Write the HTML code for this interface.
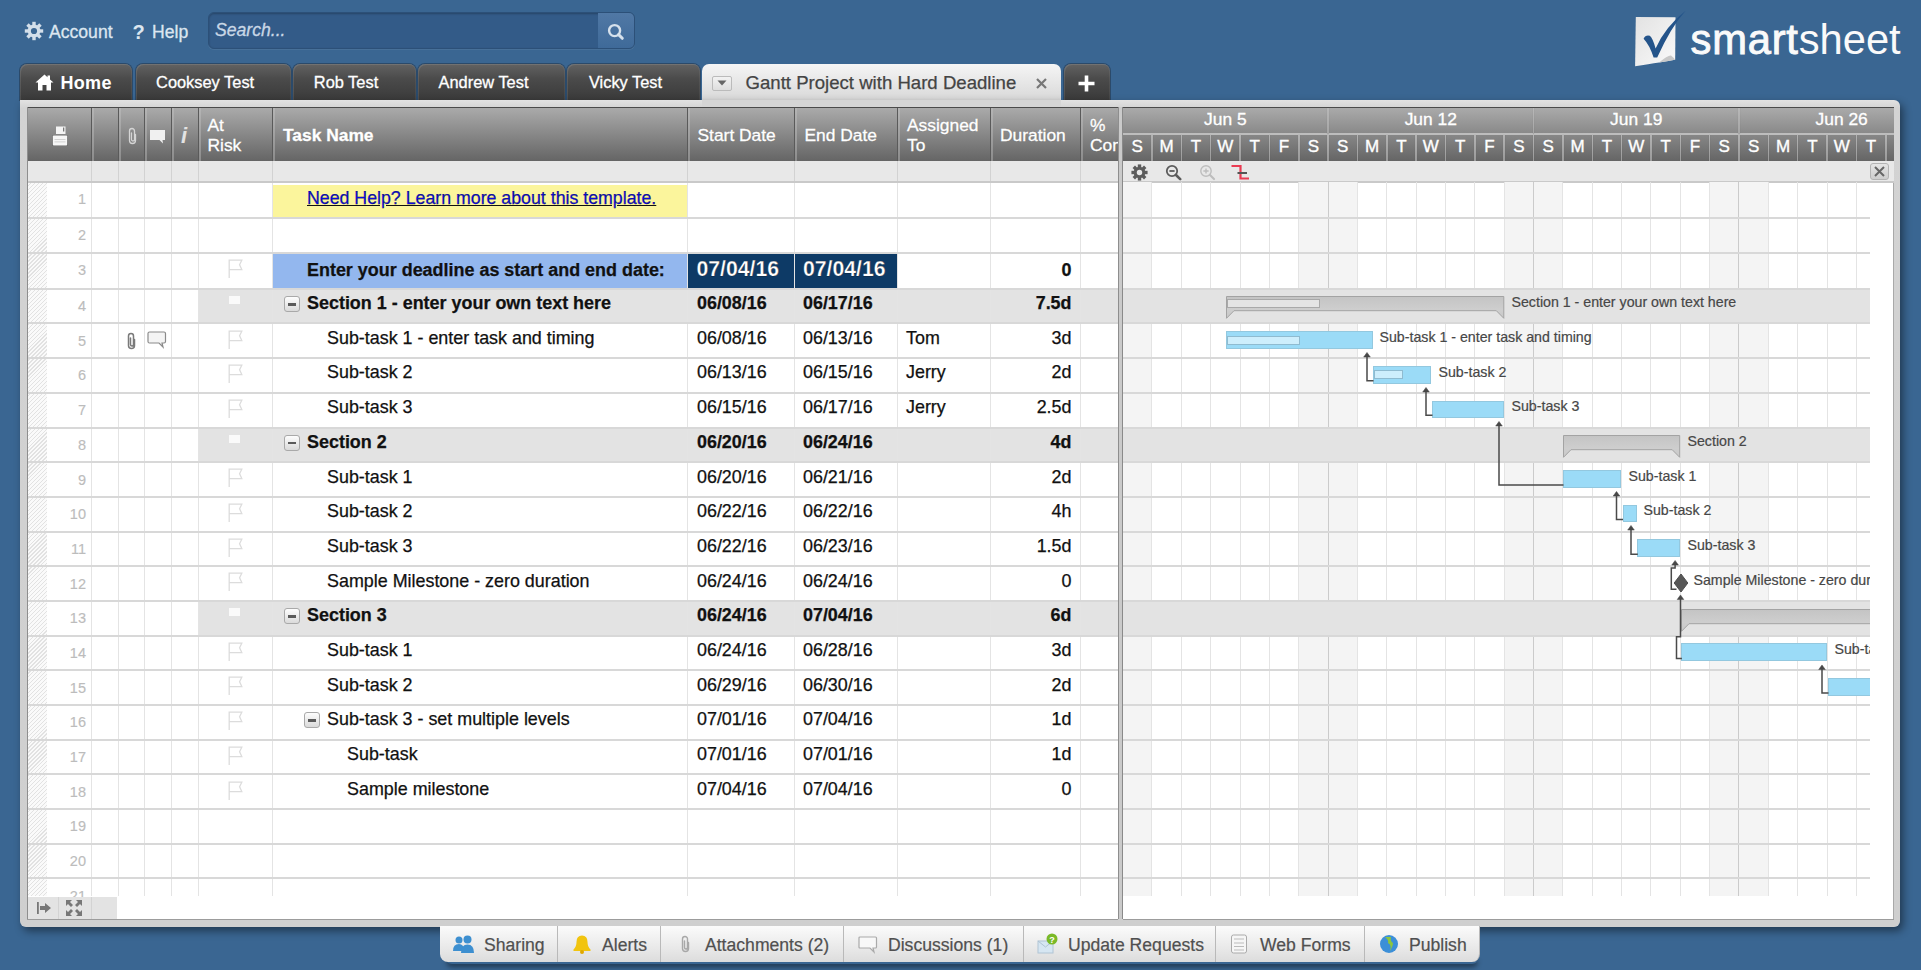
<!DOCTYPE html>
<html><head><meta charset="utf-8"><title>Smartsheet Gantt</title>
<style>
*{box-sizing:border-box;margin:0;padding:0}
html,body{width:1921px;height:970px;overflow:hidden}
body{background:#3a6692;position:relative;font-family:'Liberation Sans',sans-serif;color:#222}
.a{position:absolute}
.t{position:absolute;white-space:nowrap;line-height:1}
.tab{position:absolute;top:64px;height:36px;border-radius:7px 7px 0 0;background:linear-gradient(#626262 0%,#4b4b4b 40%,#3a3a3a 100%);box-shadow:inset 1px 1px 0 rgba(255,255,255,.10),inset -1px 0 0 rgba(255,255,255,.06), 0 0 0 1px #2b4a6a;color:#fff;font-size:16.4px;-webkit-text-stroke:0.3px #fff}
.hsep{position:absolute;top:108px;height:53px;width:3px;background:linear-gradient(#b5b5b5,#8c8c8c);border-left:1px solid #5a5a5a}
.ht{position:absolute;color:#fff;font-size:17.4px;line-height:19.7px;white-space:nowrap;-webkit-text-stroke:0.35px #fff;text-shadow:0 0 1px rgba(0,0,0,.25)}
.vl{position:absolute;width:1px;background:#e4e4e4}
.hl{position:absolute;height:2px;background:#d8d8d8}
.rn{position:absolute;color:#bcbcbc;font-size:14.5px;text-align:right;width:40px;line-height:1;-webkit-text-stroke:0.15px #bcbcbc}
.cell{position:absolute;font-size:17.9px;line-height:1;white-space:nowrap;color:#111;-webkit-text-stroke:0.25px #111}
.b{font-weight:bold}
.gl{position:absolute;font-size:14.2px;color:#474747;white-space:nowrap;line-height:1;-webkit-text-stroke:0.2px #474747}
.bar{position:absolute;background:#9bdbf7;border:1px solid #93c8df}
.prog{position:absolute;background:#cdeefc;border:1px solid #8fbbd0}
.btab{position:absolute;top:926px;height:36px;background:linear-gradient(#fbfbfb,#e6e6e6 70%,#dcdcdc);border-right:1px solid #b9b9b9;color:#444;font-size:17.6px}
</style></head><body>


<svg class="a" style="left:23.5px;top:21px" width="20" height="20" viewBox="0 0 20 20"><g fill="#d3dfea"><circle cx="10" cy="10" r="6.4"/>
<g id="teeth"><rect x="8.3" y="0.8" width="3.4" height="4" /><rect x="8.3" y="15.2" width="3.4" height="4"/><rect x="0.8" y="8.3" width="4" height="3.4"/><rect x="15.2" y="8.3" width="4" height="3.4"/></g>
<g transform="rotate(45 10 10)"><rect x="8.3" y="0.8" width="3.4" height="4" /><rect x="8.3" y="15.2" width="3.4" height="4"/><rect x="0.8" y="8.3" width="4" height="3.4"/><rect x="15.2" y="8.3" width="4" height="3.4"/></g></g>
<circle cx="10" cy="10" r="3.1" fill="#3a6692"/></svg>
<div class="t" style="left:49px;top:23.5px;font-size:17.6px;color:#dce6f0;-webkit-text-stroke:0.3px #dce6f0">Account</div>
<div class="t" style="left:132.5px;top:21.5px;font-size:20px;font-weight:bold;color:#dce6f0">?</div>
<div class="t" style="left:152px;top:23.5px;font-size:17.6px;color:#dce6f0;-webkit-text-stroke:0.3px #dce6f0">Help</div>
<div class="a" style="left:208px;top:12px;width:427px;height:37px;border-radius:6px;background:#335b88;border:1px solid #2c5078;box-shadow:inset 0 1px 2px rgba(0,0,0,.25), 0 1px 0 rgba(255,255,255,.07)"></div>
<div class="a" style="left:597.5px;top:13px;width:36.5px;height:35px;border-radius:0 5px 5px 0;background:linear-gradient(#5078a5,#3f6a99)"></div>
<div class="t" style="left:215px;top:22px;font-size:17.6px;font-style:italic;color:#c9d7e6;-webkit-text-stroke:0.3px #c9d7e6">Search...</div>
<svg class="a" style="left:606px;top:21px" width="20" height="20" viewBox="0 0 20 20"><circle cx="8.6" cy="9.6" r="5.5" fill="none" stroke="#d6e1ec" stroke-width="2.4"/><line x1="12.6" y1="13.6" x2="16.3" y2="17.3" stroke="#d6e1ec" stroke-width="3" stroke-linecap="round"/></svg>


<svg class="a" style="left:1633px;top:9px" width="58" height="60" viewBox="0 0 58 60">
<defs><linearGradient id="pg" x1="0" y1="0" x2="1" y2="1"><stop offset="0" stop-color="#e2e2e2"/><stop offset="1" stop-color="#fafafa"/></linearGradient></defs>
<path d="M2.8 7.9 L42.5 8.3 L42.2 50.8 Q30 53 2.1 57.3 Z" fill="url(#pg)"/>
<path d="M26 53.5 Q35 46 38 46.5 Q40.5 48.5 42.2 50.8 Q34 52.5 26 53.5Z" fill="#c8c8c8"/>
<path d="M10.6 29.8 Q12.5 25.6 16.8 26.8 Q19.6 28.8 22.6 39.5 Q32 18 52.6 1.8 Q38 18 24.2 48.5 L20.6 48.5 Q16.5 36 10.6 29.8 Z" fill="#24548a"/>
</svg>
<div class="t" style="left:1690.5px;top:18.6px;font-size:41.7px;color:#fafafa"><span style="-webkit-text-stroke:0.9px #fafafa;letter-spacing:0.8px">smart</span>sheet</div>

<div class="tab" style="left:20px;width:112px"></div>
<svg class="a" style="left:35px;top:74px" width="19" height="17" viewBox="0 0 19 17"><path d="M9.5 0.5 L12.5 3.2 V1.5 H15 V5.5 L18.5 8.5 L16 8.5 L16 16.5 L11.5 16.5 L11.5 11 L7.5 11 L7.5 16.5 L3 16.5 L3 8.5 L0.5 8.5 Z" fill="#fff"/></svg>
<div class="t" style="left:60.5px;top:74px;font-size:18px;font-weight:bold;color:#fff;letter-spacing:0.3px">Home</div>
<div class="tab" style="left:135.6px;width:155.00000000000003px"><div class="t" style="left:-8px;width:100%;text-align:center;top:9.7px">Cooksey Test</div></div>
<div class="tab" style="left:292.5px;width:123.0px"><div class="t" style="left:-8px;width:100%;text-align:center;top:9.7px">Rob Test</div></div>
<div class="tab" style="left:418px;width:147px"><div class="t" style="left:-8px;width:100%;text-align:center;top:9.7px">Andrew Test</div></div>
<div class="tab" style="left:567px;width:133px"><div class="t" style="left:-8px;width:100%;text-align:center;top:9.7px">Vicky Test</div></div>
<div class="a" style="left:702px;top:64px;width:359px;height:43px;border-radius:7px 7px 0 0;background:linear-gradient(#f5f5f5,#dadada 80%,#d3d3d3)"></div>
<div class="a" style="left:712px;top:75.5px;width:20px;height:15.5px;border:1px solid #bbb;border-radius:2px;background:linear-gradient(#f2f2f2,#dedede)"></div>
<svg class="a" style="left:716px;top:79px" width="12" height="8"><path d="M1.5 1.5 L10.5 1.5 L6 6.5Z" fill="#666"/></svg>
<div class="t" style="left:745.5px;top:74px;font-size:18.6px;color:#444;-webkit-text-stroke:0.25px #444">Gantt Project with Hard Deadline</div>
<svg class="a" style="left:1035px;top:77px" width="13" height="13"><path d="M2 2 L11 11 M11 2 L2 11" stroke="#777" stroke-width="2.2"/></svg>
<div class="tab" style="left:1064px;width:46px"></div>
<svg class="a" style="left:1077px;top:74px" width="19" height="19"><path d="M9.5 1.5 V17.5 M1.5 9.5 H17.5" stroke="#fff" stroke-width="3.6"/></svg>

<div class="a" style="left:20px;top:100px;width:1880px;height:826.5px;background:linear-gradient(#e2e2e2,#d3d3d3 1%,#cfcfcf);border-radius:0 6px 6px 6px;box-shadow:3px 4px 8px rgba(0,0,0,.45)"></div>
<div class="a" style="left:702px;top:100px;width:359px;height:7px;background:#d5d5d5"></div>

<div class="a" style="left:27px;top:107px;width:1091px;height:812px;background:#fff"></div>
<div class="a" style="left:1118px;top:107px;width:4.5px;height:812px;background:#cacaca;border-left:1px solid #8e8e8e;border-right:1px solid #8a8a8a"></div>
<div class="a" style="left:27px;top:107px;width:1091px;height:54px;background:linear-gradient(#aaaaaa,#656565);border-top:1.5px solid #4a4a4a"></div>
<div class="hsep" style="left:91.3px"></div>
<div class="hsep" style="left:117.7px"></div>
<div class="hsep" style="left:144.1px"></div>
<div class="hsep" style="left:170.9px"></div>
<div class="hsep" style="left:198.2px"></div>
<div class="hsep" style="left:271.8px"></div>
<div class="hsep" style="left:687.0px"></div>
<div class="hsep" style="left:793.9px"></div>
<div class="hsep" style="left:897.0px"></div>
<div class="hsep" style="left:990.1px"></div>
<div class="hsep" style="left:1079.5px"></div>

<svg class="a" style="left:51px;top:125px" width="18" height="22" viewBox="0 0 18 22"><rect x="1" y="10" width="16" height="11" rx="1.5" fill="rgba(0,0,0,.18)"/><rect x="5" y="1.5" width="9.5" height="7.5" fill="#f4f4f4"/><rect x="12" y="2.5" width="1.3" height="4" fill="#777"/><rect x="1.8" y="10.5" width="14.4" height="10" rx="1" fill="#f6f6f6"/><rect x="3.5" y="14" width="11" height="0.8" fill="#c8c8c8"/><rect x="3.5" y="16.5" width="11" height="0.8" fill="#c8c8c8"/></svg>
<svg class="a" style="left:125.5px;top:126.5px" width="12" height="18" viewBox="0 0 12 18"><path d="M5.5 6 V12.5 A1.5 1.5 0 0 0 8.5 12.5 V4 A2.5 2.5 0 0 0 3.5 4 V13.5 A3 3 0 0 0 9.5 13.5 V7.5" fill="none" stroke="#d5d5d5" stroke-width="1.3" stroke-linecap="round"/></svg>
<svg class="a" style="left:149px;top:128.5px" width="18" height="16" viewBox="0 0 18 16"><path d="M1 1 H16 V11 H13.5 L14 14.5 L10.5 11 H1 Z" fill="#f0f0f0"/></svg>
<div class="t" style="left:181px;top:124.5px;font-size:22px;font-style:italic;font-weight:bold;color:#e3e3e3">i</div>
<div class="ht" style="left:207.5px;top:116px">At<br>Risk</div>
<div class="ht b" style="left:283px;top:126px">Task Name</div>
<div class="ht" style="left:697.5px;top:126px">Start Date</div>
<div class="ht" style="left:804.5px;top:126px">End Date</div>
<div class="ht" style="left:907px;top:116px">Assigned<br>To</div>
<div class="ht" style="left:1000px;top:126px">Duration</div>
<div class="ht" style="left:1090px;top:116px;width:28px;overflow:hidden">%<br>Complete</div>

<div class="a" style="left:27px;top:161px;width:1091px;height:21px;background:#e8e8e8"></div>
<div class="vl" style="left:91.3px;top:161px;height:21px;background:#d2d2d2"></div>
<div class="vl" style="left:117.7px;top:161px;height:21px;background:#d2d2d2"></div>
<div class="vl" style="left:144.1px;top:161px;height:21px;background:#d2d2d2"></div>
<div class="vl" style="left:170.9px;top:161px;height:21px;background:#d2d2d2"></div>
<div class="vl" style="left:198.2px;top:161px;height:21px;background:#d2d2d2"></div>
<div class="vl" style="left:271.8px;top:161px;height:21px;background:#d2d2d2"></div>
<div class="vl" style="left:687.0px;top:161px;height:21px;background:#d2d2d2"></div>
<div class="vl" style="left:793.9px;top:161px;height:21px;background:#d2d2d2"></div>
<div class="vl" style="left:897.0px;top:161px;height:21px;background:#d2d2d2"></div>
<div class="vl" style="left:990.1px;top:161px;height:21px;background:#d2d2d2"></div>
<div class="vl" style="left:1079.5px;top:161px;height:21px;background:#d2d2d2"></div>
<div class="a" style="left:272.8px;top:184.56px;width:414.7px;height:32.790000000000006px;background:#fbf59c"></div>
<div class="a" style="left:272.8px;top:252.7px;width:414.7px;height:36.60000000000002px;background:#93b7ee"></div>
<div class="a" style="left:687.5px;top:252.7px;width:107px;height:36.60000000000002px;background:#0d3a66"></div>
<div class="a" style="left:794.4px;top:252.7px;width:103px;height:36.60000000000002px;background:#0d3a66"></div>
<div class="a" style="left:198.7px;top:288.8px;width:919.3px;height:34.68000000000001px;background:#e3e3e3"></div>
<div class="a" style="left:198.7px;top:427.52px;width:919.3px;height:34.680000000000064px;background:#e3e3e3"></div>
<div class="a" style="left:198.7px;top:600.9200000000001px;width:919.3px;height:34.67999999999995px;background:#e3e3e3"></div>
<div class="a" style="left:28px;top:183.06px;width:19px;height:713.44px;background:repeating-linear-gradient(135deg,#fafafa 0,#fafafa 1.9px,#e2e2e2 1.9px,#e2e2e2 2.8px)"></div>
<div class="vl" style="left:91.3px;top:182.06px;height:714.44px"></div>
<div class="vl" style="left:117.7px;top:182.06px;height:714.44px"></div>
<div class="vl" style="left:144.1px;top:182.06px;height:714.44px"></div>
<div class="vl" style="left:170.9px;top:182.06px;height:714.44px"></div>
<div class="vl" style="left:198.2px;top:182.06px;height:714.44px"></div>
<div class="vl" style="left:271.8px;top:182.06px;height:714.44px"></div>
<div class="vl" style="left:687.0px;top:182.06px;height:714.44px"></div>
<div class="vl" style="left:793.9px;top:182.06px;height:714.44px"></div>
<div class="vl" style="left:897.0px;top:182.06px;height:714.44px"></div>
<div class="vl" style="left:990.1px;top:182.06px;height:714.44px"></div>
<div class="vl" style="left:1079.5px;top:182.06px;height:714.44px"></div>
<div class="hl" style="left:27px;top:181.06px;width:1091px;background:#c9c9c9"></div>
<div class="hl" style="left:27px;top:217.05px;width:1091px;background:#d8d8d8"></div>
<div class="hl" style="left:27px;top:251.7px;width:1091px;background:#d8d8d8"></div>
<div class="hl" style="left:27px;top:287.8px;width:1091px;background:#d8d8d8"></div>
<div class="hl" style="left:27px;top:322.48px;width:1091px;background:#d8d8d8"></div>
<div class="hl" style="left:27px;top:357.16px;width:1091px;background:#d8d8d8"></div>
<div class="hl" style="left:27px;top:391.84000000000003px;width:1091px;background:#d8d8d8"></div>
<div class="hl" style="left:27px;top:426.52px;width:1091px;background:#d8d8d8"></div>
<div class="hl" style="left:27px;top:461.20000000000005px;width:1091px;background:#d8d8d8"></div>
<div class="hl" style="left:27px;top:495.88px;width:1091px;background:#d8d8d8"></div>
<div class="hl" style="left:27px;top:530.56px;width:1091px;background:#d8d8d8"></div>
<div class="hl" style="left:27px;top:565.24px;width:1091px;background:#d8d8d8"></div>
<div class="hl" style="left:27px;top:599.9200000000001px;width:1091px;background:#d8d8d8"></div>
<div class="hl" style="left:27px;top:634.6px;width:1091px;background:#d8d8d8"></div>
<div class="hl" style="left:27px;top:669.28px;width:1091px;background:#d8d8d8"></div>
<div class="hl" style="left:27px;top:703.96px;width:1091px;background:#d8d8d8"></div>
<div class="hl" style="left:27px;top:738.64px;width:1091px;background:#d8d8d8"></div>
<div class="hl" style="left:27px;top:773.3199999999999px;width:1091px;background:#d8d8d8"></div>
<div class="hl" style="left:27px;top:808.0px;width:1091px;background:#d8d8d8"></div>
<div class="hl" style="left:27px;top:842.6800000000001px;width:1091px;background:#d8d8d8"></div>
<div class="hl" style="left:27px;top:877.3599999999999px;width:1091px;background:#d8d8d8"></div>
<div class="rn" style="left:46px;top:192.36px">1</div>
<div class="cell" style="left:307px;top:190.16000000000003px;color:#0a0ae0;text-decoration:underline;font-size:17.75px">Need Help? Learn more about this template.</div>
<div class="rn" style="left:46px;top:228.35000000000002px">2</div>
<div class="rn" style="left:46px;top:263.0px">3</div>
<svg class="a" style="left:228px;top:258.9px" width="16" height="20" viewBox="0 0 16 20"><path d="M1.2 19 V1.2 H13.8 L11.6 5.8 L13.8 10.6 H1.2" fill="#fff" stroke="#dcdcdc" stroke-width="1.3"/></svg>
<div class="cell b" style="left:307px;top:261.7px;font-size:17.95px;">Enter your deadline as start and end date:</div>
<div class="cell b" style="left:696.5px;top:257.7px;color:#fff;font-size:21.2px">07/04/16</div>
<div class="cell b" style="left:803px;top:257.7px;color:#fff;font-size:21.2px">07/04/16</div>
<div class="cell b" style="left:990px;top:261.7px;width:81.5px;text-align:right">0</div>
<div class="rn" style="left:46px;top:299.1px">4</div>
<div class="a" style="left:229px;top:296.3px;width:11px;height:8px;background:#fafafa"></div>
<div class="cell b" style="left:307px;top:295.1px;font-size:17.95px;">Section 1 - enter your own text here</div>
<div class="a" style="left:284px;top:296.3px;width:15.5px;height:15.5px;border:1px solid #a9a9a9;border-radius:3px;background:linear-gradient(#fdfdfd,#dadada)"></div><div class="a" style="left:288.2px;top:303.1px;width:7.5px;height:2.6px;background:#5a5a5a"></div>
<div class="cell b" style="left:697px;top:295.1px">06/08/16</div>
<div class="cell b" style="left:803px;top:295.1px">06/17/16</div>
<div class="cell b" style="left:990px;top:295.1px;width:81.5px;text-align:right">7.5d</div>
<div class="rn" style="left:46px;top:333.78000000000003px">5</div>
<svg class="a" style="left:228px;top:329.68px" width="16" height="20" viewBox="0 0 16 20"><path d="M1.2 19 V1.2 H13.8 L11.6 5.8 L13.8 10.6 H1.2" fill="#fff" stroke="#dcdcdc" stroke-width="1.3"/></svg>
<svg class="a" style="left:125px;top:331.98px" width="12" height="18" viewBox="0 0 12 18"><path d="M5.5 6 V12.5 A1.5 1.5 0 0 0 8.5 12.5 V4 A2.5 2.5 0 0 0 3.5 4 V13.5 A3 3 0 0 0 9.5 13.5 V7.5" fill="none" stroke="#7a7a7a" stroke-width="1.5" stroke-linecap="round"/></svg>
<svg class="a" style="left:147px;top:331.48px" width="20" height="18" viewBox="0 0 20 18"><path d="M2.5 1 H17 Q18.5 1 18.5 2.5 V10.5 Q18.5 12 17 12 H15 L16 16 L12 12 H2.5 Q1 12 1 10.5 V2.5 Q1 1 2.5 1Z" fill="#f4f4f4" stroke="#8a8a8a" stroke-width="1.2"/></svg>
<div class="cell" style="left:327px;top:329.78000000000003px;">Sub-task 1 - enter task and timing</div>
<div class="cell" style="left:697px;top:329.78000000000003px">06/08/16</div>
<div class="cell" style="left:803px;top:329.78000000000003px">06/13/16</div>
<div class="cell" style="left:906px;top:329.78000000000003px">Tom</div>
<div class="cell" style="left:990px;top:329.78000000000003px;width:81.5px;text-align:right">3d</div>
<div class="rn" style="left:46px;top:368.46000000000004px">6</div>
<svg class="a" style="left:228px;top:364.36px" width="16" height="20" viewBox="0 0 16 20"><path d="M1.2 19 V1.2 H13.8 L11.6 5.8 L13.8 10.6 H1.2" fill="#fff" stroke="#dcdcdc" stroke-width="1.3"/></svg>
<div class="cell" style="left:327px;top:364.46000000000004px;">Sub-task 2</div>
<div class="cell" style="left:697px;top:364.46000000000004px">06/13/16</div>
<div class="cell" style="left:803px;top:364.46000000000004px">06/15/16</div>
<div class="cell" style="left:906px;top:364.46000000000004px">Jerry</div>
<div class="cell" style="left:990px;top:364.46000000000004px;width:81.5px;text-align:right">2d</div>
<div class="rn" style="left:46px;top:403.14000000000004px">7</div>
<svg class="a" style="left:228px;top:399.04px" width="16" height="20" viewBox="0 0 16 20"><path d="M1.2 19 V1.2 H13.8 L11.6 5.8 L13.8 10.6 H1.2" fill="#fff" stroke="#dcdcdc" stroke-width="1.3"/></svg>
<div class="cell" style="left:327px;top:399.14000000000004px;">Sub-task 3</div>
<div class="cell" style="left:697px;top:399.14000000000004px">06/15/16</div>
<div class="cell" style="left:803px;top:399.14000000000004px">06/17/16</div>
<div class="cell" style="left:906px;top:399.14000000000004px">Jerry</div>
<div class="cell" style="left:990px;top:399.14000000000004px;width:81.5px;text-align:right">2.5d</div>
<div class="rn" style="left:46px;top:437.82px">8</div>
<div class="a" style="left:229px;top:435.02px;width:11px;height:8px;background:#fafafa"></div>
<div class="cell b" style="left:307px;top:433.82px;font-size:17.95px;">Section 2</div>
<div class="a" style="left:284px;top:435.02px;width:15.5px;height:15.5px;border:1px solid #a9a9a9;border-radius:3px;background:linear-gradient(#fdfdfd,#dadada)"></div><div class="a" style="left:288.2px;top:441.82px;width:7.5px;height:2.6px;background:#5a5a5a"></div>
<div class="cell b" style="left:697px;top:433.82px">06/20/16</div>
<div class="cell b" style="left:803px;top:433.82px">06/24/16</div>
<div class="cell b" style="left:990px;top:433.82px;width:81.5px;text-align:right">4d</div>
<div class="rn" style="left:46px;top:472.50000000000006px">9</div>
<svg class="a" style="left:228px;top:468.40000000000003px" width="16" height="20" viewBox="0 0 16 20"><path d="M1.2 19 V1.2 H13.8 L11.6 5.8 L13.8 10.6 H1.2" fill="#fff" stroke="#dcdcdc" stroke-width="1.3"/></svg>
<div class="cell" style="left:327px;top:468.50000000000006px;">Sub-task 1</div>
<div class="cell" style="left:697px;top:468.50000000000006px">06/20/16</div>
<div class="cell" style="left:803px;top:468.50000000000006px">06/21/16</div>
<div class="cell" style="left:990px;top:468.50000000000006px;width:81.5px;text-align:right">2d</div>
<div class="rn" style="left:46px;top:507.18px">10</div>
<svg class="a" style="left:228px;top:503.08px" width="16" height="20" viewBox="0 0 16 20"><path d="M1.2 19 V1.2 H13.8 L11.6 5.8 L13.8 10.6 H1.2" fill="#fff" stroke="#dcdcdc" stroke-width="1.3"/></svg>
<div class="cell" style="left:327px;top:503.18px;">Sub-task 2</div>
<div class="cell" style="left:697px;top:503.18px">06/22/16</div>
<div class="cell" style="left:803px;top:503.18px">06/22/16</div>
<div class="cell" style="left:990px;top:503.18px;width:81.5px;text-align:right">4h</div>
<div class="rn" style="left:46px;top:541.8599999999999px">11</div>
<svg class="a" style="left:228px;top:537.76px" width="16" height="20" viewBox="0 0 16 20"><path d="M1.2 19 V1.2 H13.8 L11.6 5.8 L13.8 10.6 H1.2" fill="#fff" stroke="#dcdcdc" stroke-width="1.3"/></svg>
<div class="cell" style="left:327px;top:537.8599999999999px;">Sub-task 3</div>
<div class="cell" style="left:697px;top:537.8599999999999px">06/22/16</div>
<div class="cell" style="left:803px;top:537.8599999999999px">06/23/16</div>
<div class="cell" style="left:990px;top:537.8599999999999px;width:81.5px;text-align:right">1.5d</div>
<div class="rn" style="left:46px;top:576.54px">12</div>
<svg class="a" style="left:228px;top:572.44px" width="16" height="20" viewBox="0 0 16 20"><path d="M1.2 19 V1.2 H13.8 L11.6 5.8 L13.8 10.6 H1.2" fill="#fff" stroke="#dcdcdc" stroke-width="1.3"/></svg>
<div class="cell" style="left:327px;top:572.54px;">Sample Milestone - zero duration</div>
<div class="cell" style="left:697px;top:572.54px">06/24/16</div>
<div class="cell" style="left:803px;top:572.54px">06/24/16</div>
<div class="cell" style="left:990px;top:572.54px;width:81.5px;text-align:right">0</div>
<div class="rn" style="left:46px;top:611.22px">13</div>
<div class="a" style="left:229px;top:608.4200000000001px;width:11px;height:8px;background:#fafafa"></div>
<div class="cell b" style="left:307px;top:607.22px;font-size:17.95px;">Section 3</div>
<div class="a" style="left:284px;top:608.4200000000001px;width:15.5px;height:15.5px;border:1px solid #a9a9a9;border-radius:3px;background:linear-gradient(#fdfdfd,#dadada)"></div><div class="a" style="left:288.2px;top:615.22px;width:7.5px;height:2.6px;background:#5a5a5a"></div>
<div class="cell b" style="left:697px;top:607.22px">06/24/16</div>
<div class="cell b" style="left:803px;top:607.22px">07/04/16</div>
<div class="cell b" style="left:990px;top:607.22px;width:81.5px;text-align:right">6d</div>
<div class="rn" style="left:46px;top:645.9px">14</div>
<svg class="a" style="left:228px;top:641.8000000000001px" width="16" height="20" viewBox="0 0 16 20"><path d="M1.2 19 V1.2 H13.8 L11.6 5.8 L13.8 10.6 H1.2" fill="#fff" stroke="#dcdcdc" stroke-width="1.3"/></svg>
<div class="cell" style="left:327px;top:641.9px;">Sub-task 1</div>
<div class="cell" style="left:697px;top:641.9px">06/24/16</div>
<div class="cell" style="left:803px;top:641.9px">06/28/16</div>
<div class="cell" style="left:990px;top:641.9px;width:81.5px;text-align:right">3d</div>
<div class="rn" style="left:46px;top:680.5799999999999px">15</div>
<svg class="a" style="left:228px;top:676.48px" width="16" height="20" viewBox="0 0 16 20"><path d="M1.2 19 V1.2 H13.8 L11.6 5.8 L13.8 10.6 H1.2" fill="#fff" stroke="#dcdcdc" stroke-width="1.3"/></svg>
<div class="cell" style="left:327px;top:676.5799999999999px;">Sub-task 2</div>
<div class="cell" style="left:697px;top:676.5799999999999px">06/29/16</div>
<div class="cell" style="left:803px;top:676.5799999999999px">06/30/16</div>
<div class="cell" style="left:990px;top:676.5799999999999px;width:81.5px;text-align:right">2d</div>
<div class="rn" style="left:46px;top:715.26px">16</div>
<svg class="a" style="left:228px;top:711.1600000000001px" width="16" height="20" viewBox="0 0 16 20"><path d="M1.2 19 V1.2 H13.8 L11.6 5.8 L13.8 10.6 H1.2" fill="#fff" stroke="#dcdcdc" stroke-width="1.3"/></svg>
<div class="cell" style="left:327px;top:711.26px;">Sub-task 3 - set multiple levels</div>
<div class="a" style="left:304px;top:712.46px;width:15.5px;height:15.5px;border:1px solid #a9a9a9;border-radius:3px;background:linear-gradient(#fdfdfd,#dadada)"></div><div class="a" style="left:308.2px;top:719.26px;width:7.5px;height:2.6px;background:#5a5a5a"></div>
<div class="cell" style="left:697px;top:711.26px">07/01/16</div>
<div class="cell" style="left:803px;top:711.26px">07/04/16</div>
<div class="cell" style="left:990px;top:711.26px;width:81.5px;text-align:right">1d</div>
<div class="rn" style="left:46px;top:749.9399999999999px">17</div>
<svg class="a" style="left:228px;top:745.84px" width="16" height="20" viewBox="0 0 16 20"><path d="M1.2 19 V1.2 H13.8 L11.6 5.8 L13.8 10.6 H1.2" fill="#fff" stroke="#dcdcdc" stroke-width="1.3"/></svg>
<div class="cell" style="left:347px;top:745.9399999999999px;">Sub-task</div>
<div class="cell" style="left:697px;top:745.9399999999999px">07/01/16</div>
<div class="cell" style="left:803px;top:745.9399999999999px">07/01/16</div>
<div class="cell" style="left:990px;top:745.9399999999999px;width:81.5px;text-align:right">1d</div>
<div class="rn" style="left:46px;top:784.6199999999999px">18</div>
<svg class="a" style="left:228px;top:780.52px" width="16" height="20" viewBox="0 0 16 20"><path d="M1.2 19 V1.2 H13.8 L11.6 5.8 L13.8 10.6 H1.2" fill="#fff" stroke="#dcdcdc" stroke-width="1.3"/></svg>
<div class="cell" style="left:347px;top:780.6199999999999px;">Sample milestone</div>
<div class="cell" style="left:697px;top:780.6199999999999px">07/04/16</div>
<div class="cell" style="left:803px;top:780.6199999999999px">07/04/16</div>
<div class="cell" style="left:990px;top:780.6199999999999px;width:81.5px;text-align:right">0</div>
<div class="rn" style="left:46px;top:819.3px">19</div>
<div class="rn" style="left:46px;top:853.98px">20</div>
<div class="rn" style="left:46px;top:888.6599999999999px">21</div>
<div class="a" style="left:27px;top:896.5px;width:1091px;height:22.5px;background:#fff"></div>
<div class="a" style="left:27px;top:896.5px;width:90px;height:22.5px;background:#e3e3e3"></div>
<div class="a" style="left:57.5px;top:897px;width:1px;height:22px;background:#d3d3d3"></div><div class="a" style="left:91px;top:897px;width:1px;height:22px;background:#d3d3d3"></div>
<svg class="a" style="left:36px;top:900px" width="16" height="16" viewBox="0 0 16 16"><rect x="1" y="2" width="1.8" height="12" fill="#777"/><path d="M4 6 H9 V3 L15 8 L9 13 V10 H4Z" fill="#777"/></svg>
<svg class="a" style="left:65px;top:899px" width="18" height="18" viewBox="0 0 18 18"><g fill="#777"><path d="M1 1 H7 L5 3 L8 6 L6 8 L3 5 L1 7Z"/><path d="M17 1 V7 L15 5 L12 8 L10 6 L13 3 L11 1Z"/><path d="M1 17 V11 L3 13 L6 10 L8 12 L5 15 L7 17Z"/><path d="M17 17 H11 L13 15 L10 12 L12 10 L15 13 L17 11Z"/></g></svg>
<div class="a" style="left:26.5px;top:107px;width:1px;height:812.5px;background:#8e8e8e"></div>
<div class="a" style="left:27px;top:918.8px;width:1091px;height:1px;background:#9c9c9c"></div>
<div class="a" style="left:1122.5px;top:918.8px;width:771px;height:1px;background:#9c9c9c"></div>
<div class="a" style="left:1122.5px;top:107px;width:771px;height:812px;background:#fff;overflow:hidden">
<div class="a" style="left:0;top:0;width:771px;height:54px;background:linear-gradient(#aaaaaa,#656565);border-top:1.5px solid #4a4a4a"></div>
<div class="a" style="left:0;top:26px;width:771px;height:1.5px;background:#bdbdbd"></div>
<div class="t" style="left:-0.23000000000000043px;width:30px;text-align:center;top:31.3px;font-size:17px;color:#fff;-webkit-text-stroke:0.35px #fff">S</div>
<div class="a" style="left:28.75px;top:27.5px;width:1.5px;height:26px;background:linear-gradient(#b3b3b3,#9a9a9a);box-shadow:0 0 0.8px rgba(0,0,0,.25)"></div>
<div class="t" style="left:29.119999999999997px;width:30px;text-align:center;top:31.3px;font-size:17px;color:#fff;-webkit-text-stroke:0.35px #fff">M</div>
<div class="a" style="left:58.099999999999994px;top:27.5px;width:1.5px;height:26px;background:linear-gradient(#b3b3b3,#9a9a9a);box-shadow:0 0 0.8px rgba(0,0,0,.25)"></div>
<div class="t" style="left:58.47px;width:30px;text-align:center;top:31.3px;font-size:17px;color:#fff;-webkit-text-stroke:0.35px #fff">T</div>
<div class="a" style="left:87.45px;top:27.5px;width:1.5px;height:26px;background:linear-gradient(#b3b3b3,#9a9a9a);box-shadow:0 0 0.8px rgba(0,0,0,.25)"></div>
<div class="t" style="left:87.82px;width:30px;text-align:center;top:31.3px;font-size:17px;color:#fff;-webkit-text-stroke:0.35px #fff">W</div>
<div class="a" style="left:116.8px;top:27.5px;width:1.5px;height:26px;background:linear-gradient(#b3b3b3,#9a9a9a);box-shadow:0 0 0.8px rgba(0,0,0,.25)"></div>
<div class="t" style="left:117.16999999999999px;width:30px;text-align:center;top:31.3px;font-size:17px;color:#fff;-webkit-text-stroke:0.35px #fff">T</div>
<div class="a" style="left:146.15px;top:27.5px;width:1.5px;height:26px;background:linear-gradient(#b3b3b3,#9a9a9a);box-shadow:0 0 0.8px rgba(0,0,0,.25)"></div>
<div class="t" style="left:146.52px;width:30px;text-align:center;top:31.3px;font-size:17px;color:#fff;-webkit-text-stroke:0.35px #fff">F</div>
<div class="a" style="left:175.5px;top:27.5px;width:1.5px;height:26px;background:linear-gradient(#b3b3b3,#9a9a9a);box-shadow:0 0 0.8px rgba(0,0,0,.25)"></div>
<div class="t" style="left:175.87px;width:30px;text-align:center;top:31.3px;font-size:17px;color:#fff;-webkit-text-stroke:0.35px #fff">S</div>
<div class="a" style="left:204.85000000000002px;top:27.5px;width:1.5px;height:26px;background:linear-gradient(#b3b3b3,#9a9a9a);box-shadow:0 0 0.8px rgba(0,0,0,.25)"></div>
<div class="t" style="left:205.22px;width:30px;text-align:center;top:31.3px;font-size:17px;color:#fff;-webkit-text-stroke:0.35px #fff">S</div>
<div class="a" style="left:234.20000000000002px;top:27.5px;width:1.5px;height:26px;background:linear-gradient(#b3b3b3,#9a9a9a);box-shadow:0 0 0.8px rgba(0,0,0,.25)"></div>
<div class="t" style="left:234.57px;width:30px;text-align:center;top:31.3px;font-size:17px;color:#fff;-webkit-text-stroke:0.35px #fff">M</div>
<div class="a" style="left:263.55px;top:27.5px;width:1.5px;height:26px;background:linear-gradient(#b3b3b3,#9a9a9a);box-shadow:0 0 0.8px rgba(0,0,0,.25)"></div>
<div class="t" style="left:263.92px;width:30px;text-align:center;top:31.3px;font-size:17px;color:#fff;-webkit-text-stroke:0.35px #fff">T</div>
<div class="a" style="left:292.90000000000003px;top:27.5px;width:1.5px;height:26px;background:linear-gradient(#b3b3b3,#9a9a9a);box-shadow:0 0 0.8px rgba(0,0,0,.25)"></div>
<div class="t" style="left:293.27px;width:30px;text-align:center;top:31.3px;font-size:17px;color:#fff;-webkit-text-stroke:0.35px #fff">W</div>
<div class="a" style="left:322.25px;top:27.5px;width:1.5px;height:26px;background:linear-gradient(#b3b3b3,#9a9a9a);box-shadow:0 0 0.8px rgba(0,0,0,.25)"></div>
<div class="t" style="left:322.62px;width:30px;text-align:center;top:31.3px;font-size:17px;color:#fff;-webkit-text-stroke:0.35px #fff">T</div>
<div class="a" style="left:351.6px;top:27.5px;width:1.5px;height:26px;background:linear-gradient(#b3b3b3,#9a9a9a);box-shadow:0 0 0.8px rgba(0,0,0,.25)"></div>
<div class="t" style="left:351.97px;width:30px;text-align:center;top:31.3px;font-size:17px;color:#fff;-webkit-text-stroke:0.35px #fff">F</div>
<div class="a" style="left:380.95px;top:27.5px;width:1.5px;height:26px;background:linear-gradient(#b3b3b3,#9a9a9a);box-shadow:0 0 0.8px rgba(0,0,0,.25)"></div>
<div class="t" style="left:381.32px;width:30px;text-align:center;top:31.3px;font-size:17px;color:#fff;-webkit-text-stroke:0.35px #fff">S</div>
<div class="a" style="left:410.3px;top:27.5px;width:1.5px;height:26px;background:linear-gradient(#b3b3b3,#9a9a9a);box-shadow:0 0 0.8px rgba(0,0,0,.25)"></div>
<div class="t" style="left:410.67px;width:30px;text-align:center;top:31.3px;font-size:17px;color:#fff;-webkit-text-stroke:0.35px #fff">S</div>
<div class="a" style="left:439.65000000000003px;top:27.5px;width:1.5px;height:26px;background:linear-gradient(#b3b3b3,#9a9a9a);box-shadow:0 0 0.8px rgba(0,0,0,.25)"></div>
<div class="t" style="left:440.02px;width:30px;text-align:center;top:31.3px;font-size:17px;color:#fff;-webkit-text-stroke:0.35px #fff">M</div>
<div class="a" style="left:469.0px;top:27.5px;width:1.5px;height:26px;background:linear-gradient(#b3b3b3,#9a9a9a);box-shadow:0 0 0.8px rgba(0,0,0,.25)"></div>
<div class="t" style="left:469.37px;width:30px;text-align:center;top:31.3px;font-size:17px;color:#fff;-webkit-text-stroke:0.35px #fff">T</div>
<div class="a" style="left:498.35px;top:27.5px;width:1.5px;height:26px;background:linear-gradient(#b3b3b3,#9a9a9a);box-shadow:0 0 0.8px rgba(0,0,0,.25)"></div>
<div class="t" style="left:498.72px;width:30px;text-align:center;top:31.3px;font-size:17px;color:#fff;-webkit-text-stroke:0.35px #fff">W</div>
<div class="a" style="left:527.6999999999999px;top:27.5px;width:1.5px;height:26px;background:linear-gradient(#b3b3b3,#9a9a9a);box-shadow:0 0 0.8px rgba(0,0,0,.25)"></div>
<div class="t" style="left:528.08px;width:30px;text-align:center;top:31.3px;font-size:17px;color:#fff;-webkit-text-stroke:0.35px #fff">T</div>
<div class="a" style="left:557.05px;top:27.5px;width:1.5px;height:26px;background:linear-gradient(#b3b3b3,#9a9a9a);box-shadow:0 0 0.8px rgba(0,0,0,.25)"></div>
<div class="t" style="left:557.42px;width:30px;text-align:center;top:31.3px;font-size:17px;color:#fff;-webkit-text-stroke:0.35px #fff">F</div>
<div class="a" style="left:586.4px;top:27.5px;width:1.5px;height:26px;background:linear-gradient(#b3b3b3,#9a9a9a);box-shadow:0 0 0.8px rgba(0,0,0,.25)"></div>
<div class="t" style="left:586.77px;width:30px;text-align:center;top:31.3px;font-size:17px;color:#fff;-webkit-text-stroke:0.35px #fff">S</div>
<div class="a" style="left:615.75px;top:27.5px;width:1.5px;height:26px;background:linear-gradient(#b3b3b3,#9a9a9a);box-shadow:0 0 0.8px rgba(0,0,0,.25)"></div>
<div class="t" style="left:616.12px;width:30px;text-align:center;top:31.3px;font-size:17px;color:#fff;-webkit-text-stroke:0.35px #fff">S</div>
<div class="a" style="left:645.0999999999999px;top:27.5px;width:1.5px;height:26px;background:linear-gradient(#b3b3b3,#9a9a9a);box-shadow:0 0 0.8px rgba(0,0,0,.25)"></div>
<div class="t" style="left:645.47px;width:30px;text-align:center;top:31.3px;font-size:17px;color:#fff;-webkit-text-stroke:0.35px #fff">M</div>
<div class="a" style="left:674.4499999999999px;top:27.5px;width:1.5px;height:26px;background:linear-gradient(#b3b3b3,#9a9a9a);box-shadow:0 0 0.8px rgba(0,0,0,.25)"></div>
<div class="t" style="left:674.83px;width:30px;text-align:center;top:31.3px;font-size:17px;color:#fff;-webkit-text-stroke:0.35px #fff">T</div>
<div class="a" style="left:703.8px;top:27.5px;width:1.5px;height:26px;background:linear-gradient(#b3b3b3,#9a9a9a);box-shadow:0 0 0.8px rgba(0,0,0,.25)"></div>
<div class="t" style="left:704.17px;width:30px;text-align:center;top:31.3px;font-size:17px;color:#fff;-webkit-text-stroke:0.35px #fff">W</div>
<div class="a" style="left:733.15px;top:27.5px;width:1.5px;height:26px;background:linear-gradient(#b3b3b3,#9a9a9a);box-shadow:0 0 0.8px rgba(0,0,0,.25)"></div>
<div class="t" style="left:733.52px;width:30px;text-align:center;top:31.3px;font-size:17px;color:#fff;-webkit-text-stroke:0.35px #fff">T</div>
<div class="a" style="left:762.5px;top:27.5px;width:1.5px;height:26px;background:linear-gradient(#b3b3b3,#9a9a9a);box-shadow:0 0 0.8px rgba(0,0,0,.25)"></div>
<div class="t" style="left:762.87px;width:30px;text-align:center;top:31.3px;font-size:17px;color:#fff;-webkit-text-stroke:0.35px #fff">F</div>
<div class="t" style="left:52.81999999999999px;width:100px;text-align:center;top:4.3px;font-size:17.4px;color:#fff;-webkit-text-stroke:0.3px #fff">Jun 5</div>
<div class="a" style="left:204.85000000000002px;top:1px;width:1.5px;height:26px;background:linear-gradient(#b8b8b8,#a5a5a5);box-shadow:0 0 0.8px rgba(0,0,0,.25)"></div>
<div class="t" style="left:258.27px;width:100px;text-align:center;top:4.3px;font-size:17.4px;color:#fff;-webkit-text-stroke:0.3px #fff">Jun 12</div>
<div class="a" style="left:410.3px;top:1px;width:1.5px;height:26px;background:linear-gradient(#b8b8b8,#a5a5a5);box-shadow:0 0 0.8px rgba(0,0,0,.25)"></div>
<div class="t" style="left:463.72px;width:100px;text-align:center;top:4.3px;font-size:17.4px;color:#fff;-webkit-text-stroke:0.3px #fff">Jun 19</div>
<div class="a" style="left:615.75px;top:1px;width:1.5px;height:26px;background:linear-gradient(#b8b8b8,#a5a5a5);box-shadow:0 0 0.8px rgba(0,0,0,.25)"></div>
<div class="t" style="left:669.17px;width:100px;text-align:center;top:4.3px;font-size:17.4px;color:#fff;-webkit-text-stroke:0.3px #fff">Jun 26</div>
<div class="a" style="left:0;top:54px;width:771px;height:21px;background:#e8e8e8"></div>
<div class="a" style="left:0;top:74px;width:771px;height:2px;background:#c9c9c9"></div>

<svg class="a" style="left:8.0px;top:56.5px" width="17" height="17" viewBox="0 0 20 20"><g fill="#5c5c5c"><circle cx="10" cy="10" r="6.8"/>
<rect x="8" y="0.5" width="4" height="4"/><rect x="8" y="15.5" width="4" height="4"/><rect x="0.5" y="8" width="4" height="4"/><rect x="15.5" y="8" width="4" height="4"/>
<g transform="rotate(45 10 10)"><rect x="8" y="0.5" width="4" height="4"/><rect x="8" y="15.5" width="4" height="4"/><rect x="0.5" y="8" width="4" height="4"/><rect x="15.5" y="8" width="4" height="4"/></g></g><circle cx="10" cy="10" r="3.2" fill="#e8e8e8"/></svg>
<svg class="a" style="left:42.5px;top:56.5px" width="17" height="17" viewBox="0 0 17 17"><circle cx="7" cy="7" r="5.2" fill="none" stroke="#5c5c5c" stroke-width="1.8"/><path d="M4.4 7 H9.6" stroke="#5c5c5c" stroke-width="1.8"/><path d="M11 11 L15.2 15.2" stroke="#5c5c5c" stroke-width="2.6" stroke-linecap="round"/></svg>
<svg class="a" style="left:76.0px;top:56.5px" width="17" height="17" viewBox="0 0 17 17"><circle cx="7" cy="7" r="5.2" fill="none" stroke="#bdbdbd" stroke-width="1.4"/><path d="M4.4 7 H9.6 M7 4.4 V9.6" stroke="#bdbdbd" stroke-width="1.4"/><path d="M11 11 L15 15" stroke="#bdbdbd" stroke-width="2.2" stroke-linecap="round"/></svg>
<svg class="a" style="left:108.0px;top:56.5px" width="20" height="18" viewBox="0 0 20 18"><path d="M0.5 2 H9.5 V14.5 H18" fill="none" stroke="#ea3b52" stroke-width="2.2"/><path d="M6.5 9 H16" stroke="#555" stroke-width="2"/></svg>
<div class="a" style="left:747.0px;top:56px;width:19.5px;height:17px;border:1px solid #b3b3b3;border-radius:3px;background:linear-gradient(#e4e4e4,#cdcdcd)"></div>
<svg class="a" style="left:750.5px;top:58px" width="13" height="13"><path d="M2 2 L11 11 M11 2 L2 11" stroke="#666" stroke-width="2"/></svg>

<div class="a" style="left:0;top:75.06px;width:747.5px;height:714.44px;overflow:hidden">
<div class="a" style="left:0.1px;top:0;width:29.35px;height:714.44px;background:#f4f4f4"></div>
<div class="a" style="left:176.2px;top:0;width:29.35px;height:714.44px;background:#f4f4f4"></div>
<div class="a" style="left:205.55px;top:0;width:29.35px;height:714.44px;background:#f4f4f4"></div>
<div class="a" style="left:381.65px;top:0;width:29.35px;height:714.44px;background:#f4f4f4"></div>
<div class="a" style="left:411.0px;top:0;width:29.35px;height:714.44px;background:#f4f4f4"></div>
<div class="a" style="left:587.1px;top:0;width:29.35px;height:714.44px;background:#f4f4f4"></div>
<div class="a" style="left:616.45px;top:0;width:29.35px;height:714.44px;background:#f4f4f4"></div>
<div class="a" style="left:28.95px;top:0;width:1px;height:714.44px;background:#e4e4e4"></div>
<div class="a" style="left:58.3px;top:0;width:1px;height:714.44px;background:#e4e4e4"></div>
<div class="a" style="left:87.65px;top:0;width:1px;height:714.44px;background:#e4e4e4"></div>
<div class="a" style="left:117.0px;top:0;width:1px;height:714.44px;background:#e4e4e4"></div>
<div class="a" style="left:146.35px;top:0;width:1px;height:714.44px;background:#e4e4e4"></div>
<div class="a" style="left:175.7px;top:0;width:1px;height:714.44px;background:#e4e4e4"></div>
<div class="a" style="left:205.05px;top:0;width:1px;height:714.44px;background:#cbcbcb"></div>
<div class="a" style="left:234.4px;top:0;width:1px;height:714.44px;background:#e4e4e4"></div>
<div class="a" style="left:263.75px;top:0;width:1px;height:714.44px;background:#e4e4e4"></div>
<div class="a" style="left:293.1px;top:0;width:1px;height:714.44px;background:#e4e4e4"></div>
<div class="a" style="left:322.45px;top:0;width:1px;height:714.44px;background:#e4e4e4"></div>
<div class="a" style="left:351.8px;top:0;width:1px;height:714.44px;background:#e4e4e4"></div>
<div class="a" style="left:381.15px;top:0;width:1px;height:714.44px;background:#e4e4e4"></div>
<div class="a" style="left:410.5px;top:0;width:1px;height:714.44px;background:#cbcbcb"></div>
<div class="a" style="left:439.85px;top:0;width:1px;height:714.44px;background:#e4e4e4"></div>
<div class="a" style="left:469.2px;top:0;width:1px;height:714.44px;background:#e4e4e4"></div>
<div class="a" style="left:498.55px;top:0;width:1px;height:714.44px;background:#e4e4e4"></div>
<div class="a" style="left:527.9px;top:0;width:1px;height:714.44px;background:#e4e4e4"></div>
<div class="a" style="left:557.25px;top:0;width:1px;height:714.44px;background:#e4e4e4"></div>
<div class="a" style="left:586.6px;top:0;width:1px;height:714.44px;background:#e4e4e4"></div>
<div class="a" style="left:615.95px;top:0;width:1px;height:714.44px;background:#cbcbcb"></div>
<div class="a" style="left:645.3px;top:0;width:1px;height:714.44px;background:#e4e4e4"></div>
<div class="a" style="left:674.65px;top:0;width:1px;height:714.44px;background:#e4e4e4"></div>
<div class="a" style="left:704.0px;top:0;width:1px;height:714.44px;background:#e4e4e4"></div>
<div class="a" style="left:733.35px;top:0;width:1px;height:714.44px;background:#e4e4e4"></div>
<div class="a" style="left:762.7px;top:0;width:1px;height:714.44px;background:#e4e4e4"></div>
<div class="a" style="left:0;top:106.74px;width:747.5px;height:34.68000000000001px;background:#e3e3e3"></div>
<div class="a" style="left:0;top:245.46px;width:747.5px;height:34.680000000000064px;background:#e3e3e3"></div>
<div class="a" style="left:0;top:418.86px;width:747.5px;height:34.67999999999995px;background:#e3e3e3"></div>
<div class="hl" style="left:0;top:34.99px;width:747.5px"></div>
<div class="hl" style="left:0;top:69.64px;width:747.5px"></div>
<div class="hl" style="left:0;top:105.74px;width:747.5px"></div>
<div class="hl" style="left:0;top:140.42px;width:747.5px"></div>
<div class="hl" style="left:0;top:175.1px;width:747.5px"></div>
<div class="hl" style="left:0;top:209.78px;width:747.5px"></div>
<div class="hl" style="left:0;top:244.46px;width:747.5px"></div>
<div class="hl" style="left:0;top:279.14px;width:747.5px"></div>
<div class="hl" style="left:0;top:313.82px;width:747.5px"></div>
<div class="hl" style="left:0;top:348.5px;width:747.5px"></div>
<div class="hl" style="left:0;top:383.18px;width:747.5px"></div>
<div class="hl" style="left:0;top:417.86px;width:747.5px"></div>
<div class="hl" style="left:0;top:452.54px;width:747.5px"></div>
<div class="hl" style="left:0;top:487.22px;width:747.5px"></div>
<div class="hl" style="left:0;top:521.9px;width:747.5px"></div>
<div class="hl" style="left:0;top:556.58px;width:747.5px"></div>
<div class="hl" style="left:0;top:591.26px;width:747.5px"></div>
<div class="hl" style="left:0;top:625.94px;width:747.5px"></div>
<div class="hl" style="left:0;top:660.62px;width:747.5px"></div>
<div class="hl" style="left:0;top:695.3px;width:747.5px"></div>
<svg class="a" style="left:103.5px;top:114.44px;overflow:visible" width="278.29999999999995" height="24"><defs><linearGradient id="sg4" x1="0" y1="0" x2="0" y2="1"><stop offset="0" stop-color="#c4c4c4"/><stop offset="0.6" stop-color="#cecece"/><stop offset="1" stop-color="#c8c8c8"/></linearGradient></defs><path d="M0.5 0.5 H277.79999999999995 V22.3 L270.29999999999995 14.7 H8 L0.5 22.3 Z" fill="url(#sg4)" stroke="#a3a3a3" stroke-width="1"/></svg>
<div class="a" style="left:104.5px;top:117.44px;width:93px;height:8.6px;background:#e4e4e4;border:1px solid #a9a9a9"></div>
<div class="gl" style="left:389.0px;top:113.34px">Section 1 - enter your own text here</div>
<div class="bar" style="left:103.5px;top:149.12px;width:146.5px;height:17.8px"></div>
<div class="prog" style="left:104.5px;top:153.62px;width:72.5px;height:9px"></div>
<div class="gl" style="left:257.0px;top:148.02px">Sub-task 1 - enter task and timing</div>
<div class="bar" style="left:250.5px;top:183.8px;width:58px;height:17.8px"></div>
<div class="prog" style="left:251.5px;top:188.3px;width:28.5px;height:9px"></div>
<div class="gl" style="left:316.0px;top:182.7px">Sub-task 2</div>
<div class="bar" style="left:309.5px;top:218.48px;width:72.29999999999995px;height:17.8px"></div>
<div class="gl" style="left:389.0px;top:217.38px">Sub-task 3</div>
<svg class="a" style="left:440.9px;top:253.16px;overflow:visible" width="117.19999999999982" height="24"><defs><linearGradient id="sg8" x1="0" y1="0" x2="0" y2="1"><stop offset="0" stop-color="#c4c4c4"/><stop offset="0.6" stop-color="#cecece"/><stop offset="1" stop-color="#c8c8c8"/></linearGradient></defs><path d="M0.5 0.5 H116.69999999999982 V22.3 L109.19999999999982 14.7 H8 L0.5 22.3 Z" fill="url(#sg8)" stroke="#a3a3a3" stroke-width="1"/></svg>
<div class="gl" style="left:565.0px;top:252.06px">Section 2</div>
<div class="bar" style="left:440.9px;top:287.84px;width:58.09999999999991px;height:17.8px"></div>
<div class="gl" style="left:506.0px;top:286.74px">Sub-task 1</div>
<div class="bar" style="left:500.0px;top:322.52px;width:14.5px;height:17.8px"></div>
<div class="gl" style="left:521.0px;top:321.42px">Sub-task 2</div>
<div class="bar" style="left:514.8px;top:357.2px;width:42.90000000000009px;height:17.8px"></div>
<div class="gl" style="left:565.0px;top:356.1px">Sub-task 3</div>
<svg class="a" style="left:550.0px;top:391.44px" width="16" height="20"><path d="M8 1 L14.8 10 L8 19 L1.2 10Z" fill="#575757" stroke="#4d4d4d"/></svg>
<div class="gl" style="left:571.0px;top:390.78px">Sample Milestone - zero duration</div>
<svg class="a" style="left:558.7px;top:426.56px;overflow:visible" width="188.79999999999995" height="24"><defs><linearGradient id="sg13" x1="0" y1="0" x2="0" y2="1"><stop offset="0" stop-color="#c4c4c4"/><stop offset="0.6" stop-color="#cecece"/><stop offset="1" stop-color="#c8c8c8"/></linearGradient></defs><path d="M0.5 0.5 H208.79999999999995 V14.7 H8 L0.5 22.3 Z" fill="url(#sg13)" stroke="#a3a3a3" stroke-width="1"/></svg>
<div class="bar" style="left:558.9px;top:461.24px;width:145.29999999999995px;height:17.8px"></div>
<div class="gl" style="left:712.0px;top:460.14px">Sub-task 1</div>
<div class="bar" style="left:705.5px;top:495.92px;width:72px;height:17.8px"></div>
<svg class="a" style="left:0;top:0;overflow:visible" width="1" height="1"><path d="M244.0 171.94 L244.0 198.64 L250.5 198.64" fill="none" stroke="#4a4a4a" stroke-width="1.5"/><path d="M240.7 175.04 L244.0 170.44 L247.3 175.04 Z" fill="#474747" stroke="#474747" stroke-width="0.5"/></svg>
<svg class="a" style="left:0;top:0;overflow:visible" width="1" height="1"><path d="M303.0 206.94 L303.0 233.34 L309.5 233.34" fill="none" stroke="#4a4a4a" stroke-width="1.5"/><path d="M299.7 210.04 L303.0 205.44 L306.3 210.04 Z" fill="#474747" stroke="#474747" stroke-width="0.5"/></svg>
<svg class="a" style="left:0;top:0;overflow:visible" width="1" height="1"><path d="M376.0 240.94 L376.0 302.94 L440.5 302.94" fill="none" stroke="#4a4a4a" stroke-width="1.5"/><path d="M372.7 244.04 L376.0 239.44 L379.3 244.04 Z" fill="#474747" stroke="#474747" stroke-width="0.5"/></svg>
<svg class="a" style="left:0;top:0;overflow:visible" width="1" height="1"><path d="M493.5 310.94 L493.5 337.44 L500.0 337.44" fill="none" stroke="#4a4a4a" stroke-width="1.5"/><path d="M490.2 314.04 L493.5 309.44 L496.8 314.04 Z" fill="#474747" stroke="#474747" stroke-width="0.5"/></svg>
<svg class="a" style="left:0;top:0;overflow:visible" width="1" height="1"><path d="M508.0 344.94 L508.0 372.34 L514.8 372.34" fill="none" stroke="#4a4a4a" stroke-width="1.5"/><path d="M504.7 348.04 L508.0 343.44 L511.3 348.04 Z" fill="#474747" stroke="#474747" stroke-width="0.5"/></svg>
<svg class="a" style="left:0;top:0;overflow:visible" width="1" height="1"><path d="M552.1 379.94 L552.1 385.94 L548.3 385.94 L548.3 407.24 L553.5 407.24" fill="none" stroke="#4a4a4a" stroke-width="1.5"/><path d="M548.8000000000001 383.04 L552.1 378.44 L555.4 383.04 Z" fill="#474747" stroke="#474747" stroke-width="0.5"/></svg>
<svg class="a" style="left:0;top:0;overflow:visible" width="1" height="1"><path d="M557.5 414.94 L557.5 454.64 L553.5 454.64 L553.5 476.44 L558.9 476.44" fill="none" stroke="#4a4a4a" stroke-width="1.5"/><path d="M554.2 417.54 L557.5 412.94 L560.8 417.54 Z" fill="#474747" stroke="#474747" stroke-width="0.5"/></svg>
<svg class="a" style="left:0;top:0;overflow:visible" width="1" height="1"><path d="M699.0 484.94 L699.0 510.94 L705.5 510.94" fill="none" stroke="#4a4a4a" stroke-width="1.5"/><path d="M695.7 487.54 L699.0 482.94 L702.3 487.54 Z" fill="#474747" stroke="#474747" stroke-width="0.5"/></svg>
</div>
</div>
<div class="a" style="left:1893px;top:183px;width:1px;height:736px;background:#a9a9a9"></div>
<div class="a" style="left:446px;top:958px;width:1032px;height:6px;border-radius:0 0 8px 8px;box-shadow:0 3px 5px rgba(0,0,0,.45)"></div>
<div class="btab" style="left:440px;width:118px;border-radius:0 0 0 8px"></div>
<div class="t" style="left:484px;top:936.5px;font-size:17.6px;color:#505050;-webkit-text-stroke:0.2px #505050">Sharing</div>
<div class="btab" style="left:558px;width:103px;border-radius:0"></div>
<div class="t" style="left:602px;top:936.5px;font-size:17.6px;color:#505050;-webkit-text-stroke:0.2px #505050">Alerts</div>
<div class="btab" style="left:661px;width:183px;border-radius:0"></div>
<div class="t" style="left:705px;top:936.5px;font-size:17.6px;color:#505050;-webkit-text-stroke:0.2px #505050">Attachments (2)</div>
<div class="btab" style="left:844px;width:180px;border-radius:0"></div>
<div class="t" style="left:888px;top:936.5px;font-size:17.6px;color:#505050;-webkit-text-stroke:0.2px #505050">Discussions (1)</div>
<div class="btab" style="left:1024px;width:192px;border-radius:0"></div>
<div class="t" style="left:1068px;top:936.5px;font-size:17.6px;color:#505050;-webkit-text-stroke:0.2px #505050">Update Requests</div>
<div class="btab" style="left:1216px;width:149px;border-radius:0"></div>
<div class="t" style="left:1260px;top:936.5px;font-size:17.6px;color:#505050;-webkit-text-stroke:0.2px #505050">Web Forms</div>
<div class="btab" style="left:1365px;width:115px;border-radius:0 0 8px 0"></div>
<div class="t" style="left:1409px;top:936.5px;font-size:17.6px;color:#505050;-webkit-text-stroke:0.2px #505050">Publish</div>

<svg class="a" style="left:452px;top:934px" width="24" height="20" viewBox="0 0 24 20"><g fill="#3d8fd0"><circle cx="7" cy="6" r="3.5"/><path d="M1 17 Q1 10 7 10 Q12 10 12 17Z"/><circle cx="15.5" cy="5.5" r="4"/><path d="M9 19 Q9 10.5 15.5 10.5 Q22 10.5 22 19Z"/></g></svg>
<svg class="a" style="left:572px;top:934px" width="20" height="20" viewBox="0 0 20 20"><path d="M10 1.5 Q15.5 1.5 15.5 8 Q15.5 13 18.5 15.5 V17 H1.5 V15.5 Q4.5 13 4.5 8 Q4.5 1.5 10 1.5Z" fill="#f1c40f"/><circle cx="10" cy="18" r="2" fill="#e0a800"/></svg>
<svg class="a" style="left:679px;top:935px" width="12" height="18" viewBox="0 0 12 18"><path d="M5.5 6 V12.5 A1.5 1.5 0 0 0 8.5 12.5 V4 A2.5 2.5 0 0 0 3.5 4 V13.5 A3 3 0 0 0 9.5 13.5 V7.5" fill="none" stroke="#a8a8a8" stroke-width="1.4" stroke-linecap="round"/></svg>
<svg class="a" style="left:858px;top:936px" width="20" height="18" viewBox="0 0 20 18"><path d="M2 1 H17.5 Q18.5 1 18.5 2 V11 Q18.5 12 17.5 12 H15 L16 16 L12 12 H2 Q1 12 1 11 V2 Q1 1 2 1Z" fill="#f8f8f8" stroke="#aaa" stroke-width="1.2"/></svg>
<svg class="a" style="left:1037px;top:933px" width="22" height="22" viewBox="0 0 22 22"><rect x="1" y="8" width="15" height="12" fill="#d6e6f2" stroke="#b0c4d4"/><path d="M1 8 L8.5 14 L16 8" fill="none" stroke="#b0c4d4"/><circle cx="15" cy="6" r="5.5" fill="#7ab928"/><text x="15" y="9.5" font-size="9" font-weight="bold" text-anchor="middle" fill="#fff" font-family="Liberation Sans">?</text></svg>
<svg class="a" style="left:1230px;top:934px" width="18" height="20" viewBox="0 0 18 20"><rect x="1.5" y="1" width="15" height="18" rx="2" fill="#f6f6f6" stroke="#aaa"/><path d="M4 5 H14 M4 9 H14 M4 12.5 H14 M4 16 H14" stroke="#bbb" stroke-width="1.2"/></svg>
<svg class="a" style="left:1379px;top:934px" width="20" height="20" viewBox="0 0 20 20"><circle cx="10" cy="10" r="9" fill="#3c8fd8"/><path d="M6 3 Q10 6 9 9 Q13 11 11 17 Q14 12 14 9 Q11 7 12 3Z" fill="#8cc63f"/></svg>

</body></html>
